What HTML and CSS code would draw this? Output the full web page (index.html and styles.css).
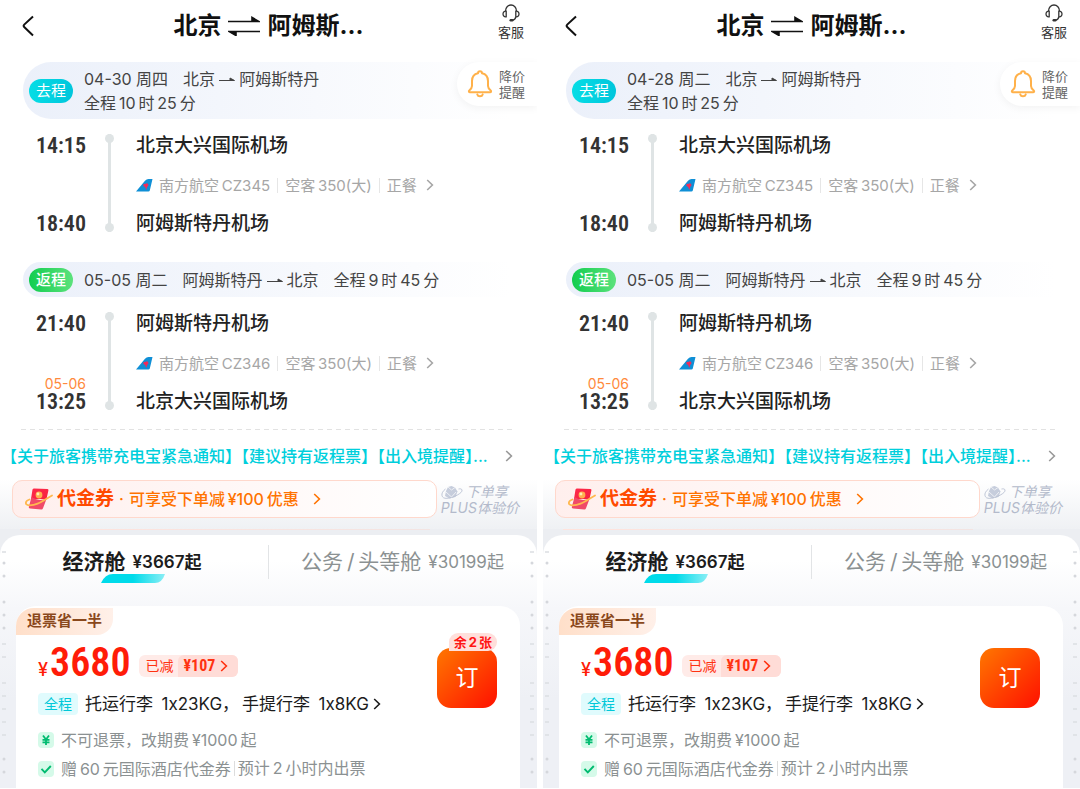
FILE: index.html
```html
<!DOCTYPE html>
<html lang="zh-CN">
<head>
    <meta charset="UTF-8">
    <meta name="viewport" content="width=device-width, initial-scale=1.0">
    <title>北京 - 阿姆斯特丹 往返机票</title>
    <link rel="stylesheet" href="styles.css">
</head>
<body>
    <svg class="sprite" aria-hidden="true">
        <defs>
            <linearGradient id="card-red" x1="0" y1="0" x2="1" y2="1">
                <stop offset="0" stop-color="#ff2a4a"/>
                <stop offset="1" stop-color="#f5233f"/>
            </linearGradient>
            <linearGradient id="tab-cyan">
                <stop offset="0.5" stop-color="#00dbea"/>
                <stop offset="1" stop-color="#8beef5"/>
            </linearGradient>
        </defs>
        <symbol id="back" viewBox="0 0 12 22">
            <path d="M11 1.5 2.2 9.6q-1.2 1.2 0 2.4L11 20.5" fill="none" stroke="#111" stroke-width="2"/>
        </symbol>
        <symbol id="chevron" viewBox="0 0 8 12">
            <path d="M1.2 1 6.4 6 1.2 11" fill="none" stroke="currentColor" stroke-width="1.6"/>
        </symbol>
        <symbol id="swap" viewBox="0 0 32 20">
            <path d="M0 5.500h31L24 1.500v4M32 15.500H1l7 4v-4" fill="#111" stroke="#111" stroke-width="1.600"/>
        </symbol>
        <symbol id="to" viewBox="0 0 16 8">
            <path d="M0 5.500h15.500L11 3v2.500" fill="#444" stroke="#444"/>
        </symbol>
        <symbol id="headset" viewBox="0 0 18 18">
            <path d="M3.500 7C3.500 3.500 6 1 9 1s5.500 2.500 5.500 6M4.200 7.200v5.600C2.500 13.300 1 12 1 10s1.500-3.300 3.200-2.800zM13.800 7.200v5.600C15.500 13.300 17 12 17 10s-1.500-3.300-3.200-2.800zM13.800 13c-.5 2-1.800 3-3.300 3.200" fill="none" stroke="#333" stroke-width="1.300"/>
            <rect x="7.500" y="15" width="4" height="2.500" rx="1.200" fill="#333"/>
        </symbol>
        <symbol id="bell" viewBox="0 0 26 28">
            <path d="M11 3.200a2 2 0 0 1 4 0c4 .8 6 3.800 6 7.800v5c0 2 1 3 2.700 4.400.8.700.4 1.900-.7 1.900H3c-1.100 0-1.500-1.200-.7-1.900C4 19 5 18 5 16v-5c0-4 2-7 6-7.800zM10.300 24.500c.6 2.400 4.800 2.400 5.400 0" fill="none" stroke="#ffb14a" stroke-width="2" stroke-linejoin="round" stroke-linecap="round"/>
        </symbol>
        <symbol id="airline" viewBox="0 0 17 13">
            <path d="M16.500 0h-4Q10.500 0 9 1.800L0 12.500h12.500q1 0 1.300-1z" fill="#0f8fd6"/>
            <path d="M7.200 5.800q.9-1.500 2.200-.7 1.500-1.500 2.900.1.500 1.900-1 2.500L10.200 11l-1-3q-1.900-.4-2-2.200z" fill="#f02c5a"/>
        </symbol>
        <symbol id="voucher" viewBox="0 0 28 22">
            <path d="M7.500 1.600Q8 .4 9 .4l13.500.6q1.300.2.900 1.500L21.500 11 6 11z" fill="url(#card-red)"/>
            <path d="M6.500 9q7 5 15.200 1.500L18 20.200q-.5 1.300-1.700 1.200L5 20.500q-1.500-.2-1.200-1.600z" fill="#f04a68"/>
            <path d="M4.500 11.500C0 12.800-.5 17 4 17.300c8 .3 13.500-4.500 23-9.800" fill="none" stroke="#ffb84e" stroke-width="1.800" stroke-linecap="round"/>
            <circle cx="14" cy="7" r="3.400" fill="#ffb04e"/>
            <circle cx="13" cy="6" r="1.400" fill="#fff0b5"/>
        </symbol>
        <symbol id="plus" viewBox="0 0 22 15">
            <path d="m7 2 3.500-1L14 2.500l2.500 4-2 5.500-6 1.500L4 11l1-5z" fill="#c6cddc"/>
            <path d="M4.500 4C-1 8 0 14 6 13.300 12 13 22 8 21 5c-.3-1.300-2-1.300-3.500-1" fill="none" stroke="#b9c1d3" stroke-width=".9"/>
            <path d="m7 2 3.500 3L14 2.500M5 7l5.500 5 4.500-5" fill="none" stroke="#eef0f5"/>
        </symbol>
        <symbol id="underline" viewBox="0 0 64 9">
            <path d="M0 9Q4 0 12 0h52q-3 9-10 9z" fill="url(#tab-cyan)"/>
        </symbol>
        <symbol id="yuan" viewBox="0 0 16 16">
            <rect width="16" height="16" rx="4" fill="#d5fae9"/>
            <path d="m5 3.500 3 4 3-4M4.500 7.800h7M4.500 10.300h7M8 7.500V13" fill="none" stroke="#00bb70" stroke-width="1.800"/>
        </symbol>
        <symbol id="check" viewBox="0 0 16 16">
            <rect width="16" height="16" rx="4" fill="#d5fae9"/>
            <path d="m3.500 7.800 3.300 3.500 6-6.300" fill="none" stroke="#00bb70" stroke-width="1.900"/>
        </symbol>
        <symbol id="rail" viewBox="0 0 4 240">
            <path d="M0 17h4M0 109h4M0 122h4M0 148h4M0 161h4M0 174h4M0 187h4M0 200h4" stroke="#dcdee2" stroke-width="1.500"/>
            <path d="M2 28h0M2 41h0M2 67h0M2 80h0M2 93h0M2 224h0M2 237h0" stroke="#d5d7dc" stroke-width="3" stroke-linecap="round"/>
        </symbol>
    </svg>

    <main class="screens">
        <section class="screen">
            <header class="topbar">
                <button class="back" aria-label="返回"><svg width="12" height="22"><use href="#back"/></svg></button>
                <h1>北京<svg width="32" height="20"><use href="#swap"/></svg>阿姆斯...</h1>
                <button class="service"><svg width="18" height="18"><use href="#headset"/></svg>客服</button>
            </header>

            <div class="trip trip-out">
                <span class="tag">去程</span>
                <div class="trip-text">
                    <p><span>04-30 周四</span><span class="route">北京<svg width="16" height="8"><use href="#to"/></svg>阿姆斯特丹</span></p>
                    <p>全程&thinsp;10&thinsp;时&thinsp;25&thinsp;分</p>
                </div>
                <button class="alert"><svg width="26" height="28"><use href="#bell"/></svg><span>降价<br>提醒</span></button>
            </div>
            <div class="leg">
                <div class="times"><time>14:15</time><time>18:40</time></div>
                <div class="track"></div>
                <div class="stops">
                    <strong>北京大兴国际机场</strong>
                    <a class="flight" href="#"><svg width="17" height="13"><use href="#airline"/></svg><span>南方航空&thinsp;CZ345</span><span>空客&thinsp;350(大)</span><span>正餐</span><svg width="8" height="12"><use href="#chevron"/></svg></a>
                    <strong>阿姆斯特丹机场</strong>
                </div>
            </div>

            <div class="trip trip-back">
                <span class="tag">返程</span>
                <div class="trip-text">
                    <p><span>05-05 周二</span><span class="route">阿姆斯特丹<svg width="16" height="8"><use href="#to"/></svg>北京</span><span>全程&thinsp;9&thinsp;时&thinsp;45&thinsp;分</span></p>
                </div>
            </div>
            <div class="leg">
                <div class="times"><time>21:40</time><time><small>05-06</small>13:25</time></div>
                <div class="track"></div>
                <div class="stops">
                    <strong>阿姆斯特丹机场</strong>
                    <a class="flight" href="#"><svg width="17" height="13"><use href="#airline"/></svg><span>南方航空&thinsp;CZ346</span><span>空客&thinsp;350(大)</span><span>正餐</span><svg width="8" height="12"><use href="#chevron"/></svg></a>
                    <strong>北京大兴国际机场</strong>
                </div>
            </div>

            <hr class="cut">
            <a class="notice" href="#"><span>【关于旅客携带充电宝紧急通知】</span><span>【建议持有返程票】</span><span>【出入境提醒】...</span><svg width="8" height="12"><use href="#chevron"/></svg></a>

            <div class="promos">
                <a class="coupon" href="#"><svg width="28" height="22"><use href="#voucher"/></svg><b>代金券</b><i>·</i><span>可享受下单减&thinsp;¥100&thinsp;优惠</span><svg width="8" height="12"><use href="#chevron"/></svg></a>
                <a class="plus" href="#"><span><svg width="22" height="15"><use href="#plus"/></svg>下单享</span><span>PLUS体验价</span></a>
            </div>
            <div class="next-coupon"></div>

            <div class="cabins">
                <svg class="rail rail-left" width="4" height="240"><use href="#rail"/></svg>
                <svg class="rail rail-right" width="4" height="240"><use href="#rail"/></svg>
                <nav class="tabs">
                    <button class="tab active"><b>经济舱</b><span>¥3667起</span><svg width="64" height="9"><use href="#underline"/></svg></button>
                    <button class="tab"><b>公务&thinsp;/&thinsp;头等舱</b><span>¥30199起</span></button>
                </nav>
                <article class="fare">
                    <span class="ribbon">退票省一半</span>
                    <div class="fare-main">
                        <div class="fare-info">
                            <div class="price-row">
                                <span class="price"><small>¥</small>3680</span>
                                <a class="discount" href="#"><span>已减</span><b>¥107<svg width="8" height="12"><use href="#chevron"/></svg></b></a>
                            </div>
                            <a class="baggage" href="#"><em>全程</em><span>托运行李&ensp;1x23KG，</span><span>手提行李&ensp;1x8KG</span><svg width="8" height="12"><use href="#chevron"/></svg></a>
                        </div>
                        <button class="order"><span class="left">余&thinsp;2&thinsp;张</span>订</button>
                    </div>
                    <p class="rule"><svg width="16" height="16"><use href="#yuan"/></svg><span>不可退票，改期费&thinsp;¥1000&thinsp;起</span></p>
                    <p class="rule"><svg width="16" height="16"><use href="#check"/></svg><span>赠&thinsp;60&thinsp;元国际酒店代金券</span><span>预计&thinsp;2&thinsp;小时内出票</span></p>
                </article>
            </div>
        </section>

        <section class="screen">
            <header class="topbar">
                <button class="back" aria-label="返回"><svg width="12" height="22"><use href="#back"/></svg></button>
                <h1>北京<svg width="32" height="20"><use href="#swap"/></svg>阿姆斯...</h1>
                <button class="service"><svg width="18" height="18"><use href="#headset"/></svg>客服</button>
            </header>

            <div class="trip trip-out">
                <span class="tag">去程</span>
                <div class="trip-text">
                    <p><span>04-28 周二</span><span class="route">北京<svg width="16" height="8"><use href="#to"/></svg>阿姆斯特丹</span></p>
                    <p>全程&thinsp;10&thinsp;时&thinsp;25&thinsp;分</p>
                </div>
                <button class="alert"><svg width="26" height="28"><use href="#bell"/></svg><span>降价<br>提醒</span></button>
            </div>
            <div class="leg">
                <div class="times"><time>14:15</time><time>18:40</time></div>
                <div class="track"></div>
                <div class="stops">
                    <strong>北京大兴国际机场</strong>
                    <a class="flight" href="#"><svg width="17" height="13"><use href="#airline"/></svg><span>南方航空&thinsp;CZ345</span><span>空客&thinsp;350(大)</span><span>正餐</span><svg width="8" height="12"><use href="#chevron"/></svg></a>
                    <strong>阿姆斯特丹机场</strong>
                </div>
            </div>

            <div class="trip trip-back">
                <span class="tag">返程</span>
                <div class="trip-text">
                    <p><span>05-05 周二</span><span class="route">阿姆斯特丹<svg width="16" height="8"><use href="#to"/></svg>北京</span><span>全程&thinsp;9&thinsp;时&thinsp;45&thinsp;分</span></p>
                </div>
            </div>
            <div class="leg">
                <div class="times"><time>21:40</time><time><small>05-06</small>13:25</time></div>
                <div class="track"></div>
                <div class="stops">
                    <strong>阿姆斯特丹机场</strong>
                    <a class="flight" href="#"><svg width="17" height="13"><use href="#airline"/></svg><span>南方航空&thinsp;CZ346</span><span>空客&thinsp;350(大)</span><span>正餐</span><svg width="8" height="12"><use href="#chevron"/></svg></a>
                    <strong>北京大兴国际机场</strong>
                </div>
            </div>

            <hr class="cut">
            <a class="notice" href="#"><span>【关于旅客携带充电宝紧急通知】</span><span>【建议持有返程票】</span><span>【出入境提醒】...</span><svg width="8" height="12"><use href="#chevron"/></svg></a>

            <div class="promos">
                <a class="coupon" href="#"><svg width="28" height="22"><use href="#voucher"/></svg><b>代金券</b><i>·</i><span>可享受下单减&thinsp;¥100&thinsp;优惠</span><svg width="8" height="12"><use href="#chevron"/></svg></a>
                <a class="plus" href="#"><span><svg width="22" height="15"><use href="#plus"/></svg>下单享</span><span>PLUS体验价</span></a>
            </div>
            <div class="next-coupon"></div>

            <div class="cabins">
                <svg class="rail rail-left" width="4" height="240"><use href="#rail"/></svg>
                <svg class="rail rail-right" width="4" height="240"><use href="#rail"/></svg>
                <nav class="tabs">
                    <button class="tab active"><b>经济舱</b><span>¥3667起</span><svg width="64" height="9"><use href="#underline"/></svg></button>
                    <button class="tab"><b>公务&thinsp;/&thinsp;头等舱</b><span>¥30199起</span></button>
                </nav>
                <article class="fare">
                    <span class="ribbon">退票省一半</span>
                    <div class="fare-main">
                        <div class="fare-info">
                            <div class="price-row">
                                <span class="price"><small>¥</small>3680</span>
                                <a class="discount" href="#"><span>已减</span><b>¥107<svg width="8" height="12"><use href="#chevron"/></svg></b></a>
                            </div>
                            <a class="baggage" href="#"><em>全程</em><span>托运行李&ensp;1x23KG，</span><span>手提行李&ensp;1x8KG</span><svg width="8" height="12"><use href="#chevron"/></svg></a>
                        </div>
                        <button class="order">订</button>
                    </div>
                    <p class="rule"><svg width="16" height="16"><use href="#yuan"/></svg><span>不可退票，改期费&thinsp;¥1000&thinsp;起</span></p>
                    <p class="rule"><svg width="16" height="16"><use href="#check"/></svg><span>赠&thinsp;60&thinsp;元国际酒店代金券</span><span>预计&thinsp;2&thinsp;小时内出票</span></p>
                </article>
            </div>
        </section>
    </main>
</body>
</html>
```
FILE: styles.css
```css
* {
    box-sizing: border-box;
}
body {
    margin: 0;
    background: #fff;
    color: #222;
    font-family: Inter, "Noto Sans CJK SC", sans-serif;
    font-size: 16px;
    line-height: 24px;
    white-space: nowrap;
}
h1, p {
    margin: 0;
}
a {
    color: inherit;
    text-decoration: none;
}
button {
    border: none;
    padding: 0;
    background: none;
    color: inherit;
    font: inherit;
    cursor: pointer;
}
svg {
    display: block;
    flex: none;
}
.sprite {
    position: absolute;
    width: 0;
    height: 0;
}
.screens {
    display: grid;
    grid-template-columns: 1fr 1fr;
    gap: 6px;
    min-height: 100vh;
    padding-bottom: 1px;
}
.screen {
    display: flex;
    flex-direction: column;
    min-width: 0;
    overflow: hidden;
}

/* top bar */
.topbar {
    display: grid;
    grid-template-columns: 60px 1fr 60px;
    height: 62px;
    padding-bottom: 10px;
    align-items: center;
}
.back {
    justify-self: start;
    padding-left: 22px;
}
.topbar h1 {
    display: flex;
    justify-content: center;
    align-items: center;
    gap: 7px;
    color: #111;
    font-size: 24px;
    line-height: 32px;
}
.service {
    display: flex;
    flex-direction: column;
    align-items: center;
    align-self: start;
    padding: 4px 0 0 8px;
    color: #333;
    font-size: 13px;
    line-height: 20px;
}

/* trip bars */
.trip {
    display: flex;
    align-items: center;
    gap: 11px;
    margin-left: 23px;
    padding-left: 6px;
    border-radius: 28px 0 0 28px;
    background: linear-gradient(90deg, #ebf0fa, #fff 95%);
    color: #444;
}
.trip-out {
    height: 57px;
    align-items: stretch;
}
.trip-out .tag, .trip-out .trip-text {
    align-self: center;
}
.trip-out .trip-text {
    padding-top: 1px;
}
.trip-back {
    height: 35px;
}
.tag {
    padding: 0 7px;
    border-radius: 12px;
    background: linear-gradient(90deg, #06dde5, #00c6dc);
    color: #fff;
    font-size: 15px;
}
.trip-back .tag {
    background: linear-gradient(90deg, #12cd4f, #5ce27c);
    font-weight: 500;
}
.trip-text p {
    display: flex;
    gap: 15px;
}
.route {
    display: flex;
    align-items: center;
    gap: 4px;
}
.alert {
    display: flex;
    align-items: center;
    align-self: flex-start;
    gap: 6px;
    height: 44px;
    margin-left: auto;
    padding: 0 12px 0 10px;
    border-radius: 22px 0 0 22px;
    background: #fff;
    box-shadow: 0 2px 8px #0000000d;
    color: #666;
    font-size: 13px;
    line-height: 16px;
}

/* timeline */
.leg {
    display: flex;
    height: 143px;
    padding: 15px 0 26px;
}
.times {
    display: flex;
    flex-direction: column;
    justify-content: space-between;
    width: 86px;
    color: #333;
    font-family: "Roboto Condensed", "Liberation Sans Narrow", Roboto, sans-serif;
    font-size: 22px;
    font-weight: 600;
    text-align: right;
}
.times small {
    display: block;
    height: 12px;
    color: #ff8a3c;
    font-family: Inter, sans-serif;
    font-size: 14px;
    font-weight: 400;
    line-height: 12px;
}
.track {
    display: flex;
    flex-direction: column;
    justify-content: space-between;
    width: 9px;
    margin: 0 22px 4px 19px;
    background: linear-gradient(#dfe4e5, #dfe4e5) center / 3px 100% no-repeat;
}
.track::before, .track::after {
    content: "";
    height: 9px;
    border-radius: 50%;
    background: #dfe4e5;
}
.stops {
    display: flex;
    flex-direction: column;
    justify-content: space-between;
}
.stops strong {
    color: #222;
    font-size: 19px;
    font-weight: 500;
}
.flight {
    display: flex;
    align-items: center;
    color: #a6a6a6;
    font-size: 15px;
}
.flight span {
    padding: 0 7px 0 6px;
    line-height: 15px;
}
.flight span + span {
    padding-left: 7px;
    border-left: 1px solid #e6e6e6;
}
.flight span + svg {
    margin-left: 2px;
}

/* notice */
.cut {
    height: 1px;
    margin: -11px 24px 0 21px;
    border: none;
    background: linear-gradient(90deg, #e2e2e2 60%, #fff0 0) 0 0 / 9px 1px repeat-x;
}
.notice {
    display: flex;
    align-items: center;
    margin: 0 24px 0 9px;
    padding: 14px 0 11px;
    color: #00cfdc;
    font-weight: 500;
    font-feature-settings: "halt";
}
.notice span + span {
    margin-left: 8px;
}
.notice svg {
    margin-left: auto;
    color: #999;
}

/* promotions */
.promos {
    display: flex;
    gap: 4px;
    padding: 1px 18px 11px 12px;
    background: linear-gradient(#fff, #eff1f4);
}
.coupon {
    display: flex;
    flex: 1;
    align-items: center;
    height: 38px;
    padding-left: 12px;
    border: 1px solid #ffd8cc;
    border-radius: 10px;
    background: linear-gradient(90deg, #ffefed, #fff);
    color: #ff7300;
    font-weight: 500;
}
.coupon b {
    margin-left: 4px;
    color: #ff4a00;
    font-size: 19px;
}
.coupon i {
    margin: 0 5px;
    font-style: normal;
}
.coupon span + svg {
    margin-left: 14px;
}
.plus {
    display: flex;
    flex-direction: column;
    padding-top: 4px;
    color: #b3bacb;
    font-size: 14px;
    font-style: italic;
    line-height: 16px;
}
.plus span {
    display: flex;
    align-items: center;
    gap: 3px;
}
.next-coupon {
    height: 26px;
    margin-bottom: -20px;
    background: linear-gradient(90deg, #ffe3dc, #f3e4e2) 20px 0 / calc(100% - 127px) 1px no-repeat #eceef2;
}

/* cabins */
.cabins {
    position: relative;
    display: flex;
    flex: 1;
    flex-direction: column;
    padding: 0 17px 0 16px;
    border-radius: 20px 20px 0 0;
    background: linear-gradient(#fff 10%, #f6f7fa 29%, #eef0f5 65%);
}
.rail {
    position: absolute;
    top: 0;
}
.rail-left {
    left: 2px;
}
.rail-right {
    right: 3px;
}
.tabs {
    display: grid;
    grid-template-columns: 1fr 1fr;
    height: 71px;
    padding-bottom: 17px;
}
.tab {
    display: flex;
    justify-content: center;
    align-items: center;
    gap: 7px;
    color: #8b9192;
    font-size: 17px;
}
.tab + .tab {
    padding-left: 17px;
    background: linear-gradient(#e2e4e6, #e2e4e6) 0 10px / 1px 34px no-repeat;
}
.tab b {
    font-size: 21px;
    font-weight: 400;
}
.active {
    position: relative;
    padding-right: 20px;
    color: #1c1c1c;
    font-weight: 600;
}
.active b {
    font-weight: 600;
}
.active svg {
    position: absolute;
    bottom: 6px;
    left: 85px;
}
.active b, .active span {
    z-index: 1;
}

/* fare card */
.fare {
    flex: 1;
    padding-top: 2px;
    border-radius: 20px 20px 0 0;
    background: #fff;
}
.ribbon {
    display: block;
    width: fit-content;
    padding: 1px 11px 2px;
    border-radius: 18px 0 16px 0;
    background: linear-gradient(90deg, #ffdfc9, #fff0e9);
    color: #8a481c;
    font-size: 15px;
    font-weight: 700;
}
.fare-main {
    display: flex;
    justify-content: space-between;
    padding: 13px 23px 0 22px;
}
.fare-info {
    padding-top: 1px;
}
.price-row {
    display: flex;
    align-items: center;
    gap: 8px;
    height: 34px;
}
.price {
    color: #ff1c08;
    font-family: "Roboto Condensed", "Liberation Sans Narrow", Roboto, sans-serif;
    font-size: 40px;
    font-weight: 600;
    line-height: 36px;
}
.price small {
    margin-right: 2px;
    font-family: Inter, sans-serif;
    font-size: 18px;
    font-weight: 500;
}
.discount {
    display: flex;
    overflow: hidden;
    border-radius: 6px;
    background: #ffebe8;
    color: #ff3211;
    font-size: 14px;
    line-height: 22px;
}
.discount span {
    padding: 0 4px 0 7px;
}
.discount b {
    display: flex;
    align-items: center;
    gap: 5px;
    padding: 0 10px 0 6px;
    border-radius: 6px 0 0 0;
    background: #ffdcd7;
    font-family: "Roboto Condensed", "Liberation Sans Narrow", Roboto, sans-serif;
    font-size: 16px;
}
.baggage {
    display: flex;
    align-items: center;
    height: 24px;
    margin-top: 9px;
    color: #1c1c1c;
    font-size: 17px;
}
.baggage em {
    margin-right: 7px;
    padding: 0 6px;
    border-radius: 4px;
    background: #e0fbfd;
    color: #00c8d8;
    font-size: 14px;
    font-style: normal;
    line-height: 22px;
}
.baggage span + span {
    margin-left: 3px;
}
.baggage svg {
    margin-left: 4px;
}
.order {
    position: relative;
    width: 60px;
    height: 60px;
    border-radius: 14px;
    background: linear-gradient(135deg, #ff6d00 10%, #ff1a00 90%);
    color: #fff;
    font-size: 23px;
}
.left {
    position: absolute;
    top: -15px;
    right: 0;
    padding: 0 5px;
    border-radius: 9px 9px 9px 0;
    background: #ffdfdb;
    color: #ff1414;
    font-size: 13px;
    font-weight: 700;
    line-height: 18px;
}
.rule {
    display: flex;
    align-items: center;
    height: 29px;
    padding-left: 22px;
    color: #8b9192;
}
.fare-main + .rule {
    margin-top: 9px;
}
.rule span {
    margin-left: 7px;
}
.rule span + span {
    margin-left: 3px;
    padding-left: 3px;
    border-left: 1px solid #ddd;
    line-height: 15px;
}
```
